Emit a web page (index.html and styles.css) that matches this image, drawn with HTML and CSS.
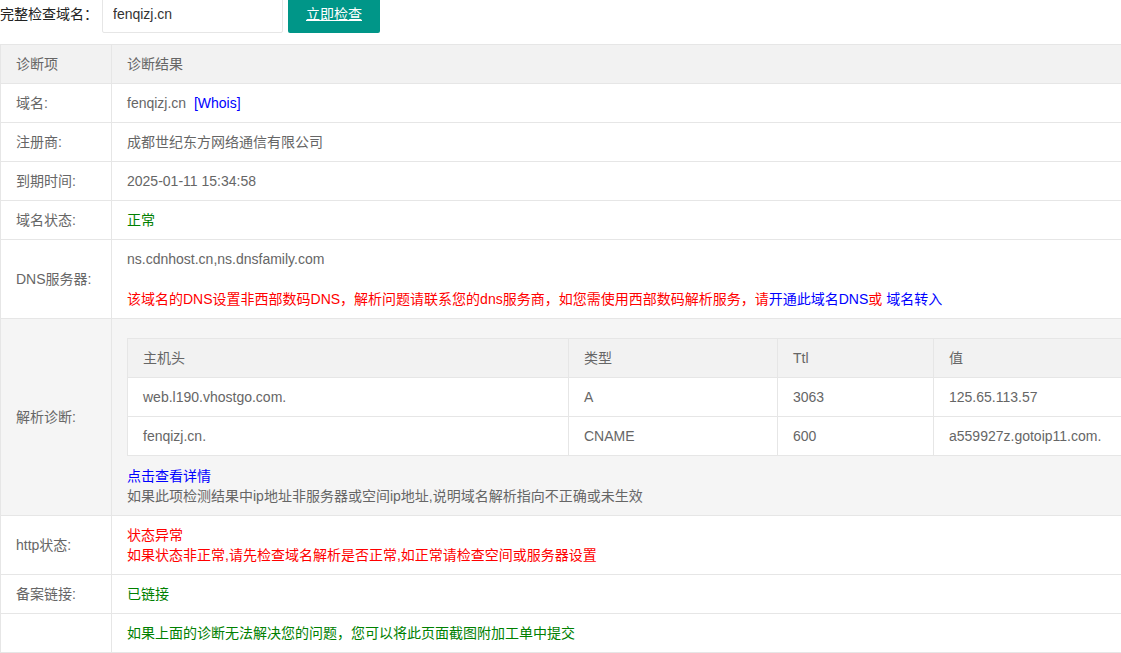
FILE: index.html
```html
<!DOCTYPE html>
<html lang="zh-CN">
<head>
    <meta charset="UTF-8">
    <meta name="viewport" content="width=device-width, initial-scale=1.0">
    <title>域名诊断</title>
    <link rel="stylesheet" href="styles.css">
</head>
<body>
    <div class="page">
        <form class="check-form" onsubmit="return false;">
            <label class="check-label" for="domain">完整检查域名：</label>
            <input class="check-input" id="domain" type="text" value="fenqizj.cn">
            <a href="#" class="check-btn">立即检查</a>
        </form>

        <table class="diag-table">
            <colgroup>
                <col class="col-name">
                <col>
            </colgroup>
            <thead>
                <tr>
                    <th>诊断项</th>
                    <th>诊断结果</th>
                </tr>
            </thead>
            <tbody>
                <tr>
                    <td>域名:</td>
                    <td>fenqizj.cn&nbsp; <a href="#" class="link">[Whois]</a></td>
                </tr>
                <tr>
                    <td>注册商:</td>
                    <td>成都世纪东方网络通信有限公司</td>
                </tr>
                <tr>
                    <td>到期时间:</td>
                    <td>2025-01-11 15:34:58</td>
                </tr>
                <tr>
                    <td>域名状态:</td>
                    <td><span class="ok">正常</span></td>
                </tr>
                <tr>
                    <td>DNS服务器:</td>
                    <td>
                        ns.cdnhost.cn,ns.dnsfamily.com<br><br>
                        <span class="warn">该域名的DNS设置非西部数码DNS，解析问题请联系您的dns服务商，如您需使用西部数码解析服务，请<a href="#" class="link">开通此域名DNS</a>或 <a href="#" class="link">域名转入</a></span>
                    </td>
                </tr>
                <tr class="row-gray">
                    <td>解析诊断:</td>
                    <td>
                        <table class="record-table">
                            <colgroup>
                                <col class="col-host">
                                <col class="col-type">
                                <col class="col-ttl">
                                <col>
                            </colgroup>
                            <thead>
                                <tr>
                                    <th>主机头</th>
                                    <th>类型</th>
                                    <th>Ttl</th>
                                    <th>值</th>
                                </tr>
                            </thead>
                            <tbody>
                                <tr>
                                    <td>web.l190.vhostgo.com.</td>
                                    <td>A</td>
                                    <td>3063</td>
                                    <td>125.65.113.57</td>
                                </tr>
                                <tr>
                                    <td>fenqizj.cn.</td>
                                    <td>CNAME</td>
                                    <td>600</td>
                                    <td>a559927z.gotoip11.com.</td>
                                </tr>
                            </tbody>
                        </table>
                        <a href="#" class="link">点击查看详情</a><br>
                        如果此项检测结果中ip地址非服务器或空间ip地址,说明域名解析指向不正确或未生效
                    </td>
                </tr>
                <tr>
                    <td>http状态:</td>
                    <td>
                        <span class="warn">状态异常</span><br>
                        <span class="warn">如果状态非正常,请先检查域名解析是否正常,如正常请检查空间或服务器设置</span>
                    </td>
                </tr>
                <tr>
                    <td>备案链接:</td>
                    <td><span class="ok">已链接</span></td>
                </tr>
                <tr>
                    <td></td>
                    <td><span class="ok">如果上面的诊断无法解决您的问题，您可以将此页面截图附加工单中提交</span></td>
                </tr>
            </tbody>
        </table>
    </div>
</body>
</html>
```

FILE: styles.css
```css
body {
    margin: 0;
    font-family: "Liberation Sans", Arial, "Noto Sans CJK SC", sans-serif;
    font-size: 14px;
    color: #666;
    background-color: #fff;
}
.page {
    overflow: hidden;
    height: 653px;
}
a {
    text-decoration: none;
}

/* search bar */
.check-form {
    display: flex;
    align-items: center;
    gap: 4px;
    height: 38px;
    margin: -5px 0 0 0;
}
.check-label {
    color: #222;
    line-height: 20px;
}
.check-input {
    box-sizing: border-box;
    width: 181px;
    height: 38px;
    padding: 0 10px;
    border: 1px solid #e6e6e6;
    border-radius: 2px;
    font-family: inherit;
    font-size: 14px;
    color: #333;
    outline: none;
}
.check-btn {
    display: inline-block;
    box-sizing: border-box;
    height: 38px;
    line-height: 38px;
    padding: 0 18px;
    margin-left: 1px;
    background-color: #009688;
    color: #fff;
    border-radius: 2px;
    text-decoration: underline;
    white-space: nowrap;
}

/* result table */
.diag-table {
    width: 1160px;
    margin-top: 11px;
    border-collapse: collapse;
    border-spacing: 0;
    table-layout: fixed;
}
.col-name {
    width: 111px;
}
.diag-table th,
.diag-table td {
    border: 1px solid #e6e6e6;
    padding: 9px 15px;
    line-height: 20px;
    min-height: 20px;
    text-align: left;
    font-weight: normal;
    vertical-align: middle;
}
.diag-table > thead > tr {
    background-color: #f2f2f2;
}
.diag-table > tbody > tr > td:last-child {
    vertical-align: top;
}
.row-gray {
    background-color: #f5f5f5;
}

.record-table {
    width: 100%;
    margin: 10px 0;
    border-collapse: collapse;
    table-layout: fixed;
    background-color: #fff;
}
.col-host {
    width: 441px;
}
.col-type {
    width: 209px;
}
.col-ttl {
    width: 156px;
}
.record-table thead tr {
    background-color: #f2f2f2;
}

.link {
    color: #0000ff;
}
.ok {
    color: #008000;
}
.warn {
    color: #ff0000;
}
```
